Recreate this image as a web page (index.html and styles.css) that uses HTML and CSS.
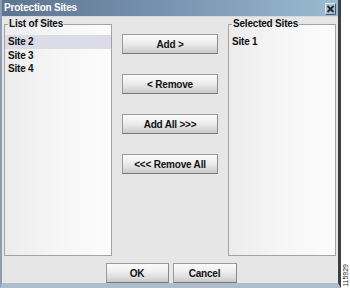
FILE: index.html
```html
<!DOCTYPE html>
<html>
<head>
<meta charset="utf-8">
<title>Protection Sites</title>
<link rel="stylesheet" href="styles.css">
</head>
<body>
<div class="page">
  <div class="window">
    <div class="titlebar">
      <span class="title">Protection Sites</span>
      <span class="close">
        <svg width="9" height="8" viewBox="0 0 9 8"><path d="M1.5 1 L7.5 7 M7.5 1 L1.5 7" stroke="#1e2630" stroke-width="1.8" fill="none"/></svg>
      </span>
    </div>
    <div class="content">
      <div class="panels">
        <fieldset class="panel">
          <legend>List of Sites</legend>
          <ul class="list">
            <li class="selected">Site 2</li>
            <li>Site 3</li>
            <li>Site 4</li>
          </ul>
        </fieldset>
        <div class="actions">
          <button class="btn wide">Add &gt;</button>
          <button class="btn wide">&lt; Remove</button>
          <button class="btn wide">Add All &gt;&gt;&gt;</button>
          <button class="btn wide">&lt;&lt;&lt; Remove All</button>
        </div>
        <fieldset class="panel">
          <legend>Selected Sites</legend>
          <ul class="list">
            <li>Site 1</li>
          </ul>
        </fieldset>
      </div>
      <div class="footer">
        <button class="btn ok">OK</button>
        <button class="btn cancel">Cancel</button>
      </div>
    </div>
  </div>
  <div class="side"><span class="figno">115929</span></div>
</div>
</body>
</html>
```

FILE: styles.css
```css
* { box-sizing: border-box; }
html, body { margin: 0; padding: 0; background: #ffffff; }
body {
  font-family: "Liberation Sans", Arial, sans-serif;
  font-size: 10px;
  font-weight: bold;
  letter-spacing: -0.2px;
  color: #111;
}
.page {
  display: flex;
  width: 350px;
  height: 288px;
}
.window {
  width: 341px;
  height: 288px;
  display: flex;
  flex-direction: column;
  border-left: 2px solid #8c9db3;
  border-right: 3px solid #3c3f44;
  border-bottom: 5px solid #aebccb;
  background: #e6e6e6;
}
.titlebar {
  height: 17px;
  display: flex;
  align-items: flex-start;
  justify-content: space-between;
  background: linear-gradient(to right, #5d7490 0%, #7590ad 45%, #9abbd2 100%);
  border-bottom: 1px solid #d4dbe3;
}
.title {
  color: #ffffff;
  font-size: 10px;
  line-height: 16px;
  padding-left: 2px;
}
.close {
  width: 11px;
  height: 12px;
  margin-top: 3px;
  margin-right: 2px;
  display: flex;
  align-items: center;
  justify-content: center;
  background: #a9bfd0;
  border: 1px solid #4a5868;
  border-top-color: #dfe8ef;
  border-left-color: #dfe8ef;
}
.content {
  flex: 1;
  display: flex;
  flex-direction: column;
  padding: 1px 2px 0 2px;
}
.panels {
  display: flex;
  height: 238px;
}
.panel {
  width: 108px;
  height: 238px;
  margin: 0;
  padding: 0;
  border: 1px solid #a3a3a3;
  background: linear-gradient(to right, #ececec 0%, #f6f6f6 50%, #fcfcfc 100%);
  min-width: 0;
}
.panel legend {
  margin-left: 3px;
  padding: 0 1px;
  line-height: 12px;
  font-size: 10px;
}
.list {
  list-style: none;
  margin: 0;
  padding: 5px 0 0 0;
}
.list li {
  height: 13.5px;
  line-height: 13.5px;
  padding-left: 3px;
}
.list li.selected {
  background: #dcdce9;
}
.actions {
  width: 116px;
  display: flex;
  flex-direction: column;
  align-items: center;
  padding-top: 16px;
  gap: 20px;
}
.btn {
  font-family: "Liberation Sans", Arial, sans-serif;
  font-size: 10px;
  font-weight: bold;
  letter-spacing: -0.2px;
  color: #111;
  height: 20px;
  padding: 0;
  margin: 0;
  border: 1px solid #9a9a9a;
  border-bottom-color: #7a7a7a;
  border-right-color: #8a8a8a;
  border-radius: 0;
  background: linear-gradient(#fbfbfb 0%, #efefef 40%, #dcdcdc 75%, #c8c8c8 100%);
}
.btn.wide { width: 96px; }
.footer {
  display: flex;
  justify-content: center;
  gap: 4px;
  padding-top: 7px;
  padding-left: 2px;
}
.btn.ok { width: 63px; }
.btn.cancel { width: 64px; }
.side {
  flex: 1;
  display: flex;
  align-items: flex-end;
  justify-content: center;
  padding-bottom: 1px;
}
.figno {
  writing-mode: vertical-rl;
  transform: rotate(180deg);
  font-size: 7px;
  font-weight: normal;
  letter-spacing: 0;
  color: #222;
  line-height: 7px;
}
```
